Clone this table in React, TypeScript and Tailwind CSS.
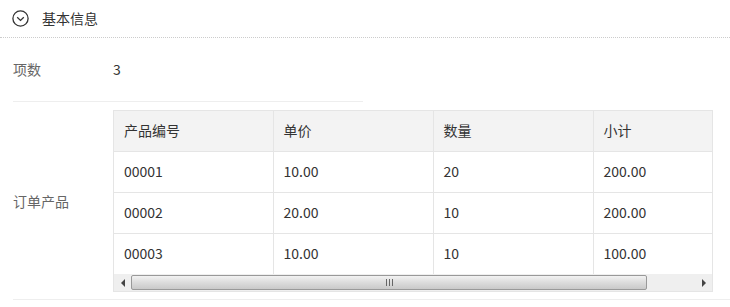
const rows = [
  { code: "00001", price: "10.00", qty: "20", total: "200.00" },
  { code: "00002", price: "20.00", qty: "10", total: "200.00" },
  { code: "00003", price: "10.00", qty: "10", total: "100.00" },
];

const heads = ["产品编号", "单价", "数量", "小计"];

function ChevronCircle() {
  return (
    <svg width="17" height="17" viewBox="0 0 17 17" fill="none">
      <circle cx="8.5" cy="8.5" r="7.6" stroke="#333" strokeWidth="1.3" />
      <path d="M5.2 7.2 L8.5 10.4 L11.8 7.2" stroke="#333" strokeWidth="1.3" />
    </svg>
  );
}

// classic-looking horizontal scrollbar under the grid
function HScrollbar() {
  return (
    <div className="flex h-[17px] bg-[#efefef]">
      <div className="flex w-[17px] items-center justify-center">
        <div className="h-0 w-0 border-y-[4px] border-r-[4px] border-y-transparent border-r-[#444]" />
      </div>
      <div className="flex flex-1 items-center">
        <div className="flex h-[15px] w-[516px] items-center justify-center rounded-[2px] border border-[#999] bg-gradient-to-b from-[#f2f2f2] via-[#dcdcdc] to-[#c9c9c9]">
          <div className="flex gap-[2px]">
            <div className="h-[7px] w-px bg-[#666]" />
            <div className="h-[7px] w-px bg-[#666]" />
            <div className="h-[7px] w-px bg-[#666]" />
          </div>
        </div>
      </div>
      <div className="flex w-[17px] items-center justify-center">
        <div className="h-0 w-0 border-y-[4px] border-l-[4px] border-y-transparent border-l-[#444]" />
      </div>
    </div>
  );
}

export default function App() {
  return (
    <div
      className="h-[307px] w-[730px] bg-white text-[14px] text-[#333]"
      style={{ fontFamily: '"Noto Sans CJK SC", "Microsoft YaHei", sans-serif' }}
    >
      {/* section title */}
      <div className="flex h-[38px] items-center gap-[13px] border-b border-dotted border-[#ccc] pl-[12px] pb-px">
        <ChevronCircle />
        <span>基本信息</span>
      </div>

      <div className="pl-[13px]">
        <div className="flex h-[64px] w-[350px] items-center border-b border-[#eee] pb-px">
          <span className="w-[100px] text-[#666]">项数</span>
          <span>3</span>
        </div>

        <div className="flex items-center border-b border-[#eee] pt-[8px] pb-[7px]">
          <span className="w-[100px] text-[#666]">订单产品</span>
          <div className="w-[600px] border border-[#e5e5e5]">
            <div className="overflow-hidden">
              <table className="w-[639px] table-fixed border-collapse">
                <thead>
                  <tr className="h-[40px] border-b border-[#e5e5e5] bg-[#f3f3f3]">
                    {heads.map((h, j) => (
                      <th
                        key={h}
                        className={`${j === 0 ? "w-[159px]" : "w-[160px]"} border-r border-[#e5e5e5] pl-[10px] text-left font-normal`}
                      >
                        {h}
                      </th>
                    ))}
                  </tr>
                </thead>
                <tbody>
                  {rows.map((r, i) => (
                    <tr key={r.code} className={i < rows.length - 1 ? "h-[41px] border-b border-[#e5e5e5]" : "h-[41px]"}>
                      {[r.code, r.price, r.qty, r.total].map((v, j) => (
                        <td key={j} className="border-r border-[#e5e5e5] pl-[10px]">
                          {v}
                        </td>
                      ))}
                    </tr>
                  ))}
                </tbody>
              </table>
            </div>
            <HScrollbar />
          </div>
        </div>
      </div>
    </div>
  );
}
